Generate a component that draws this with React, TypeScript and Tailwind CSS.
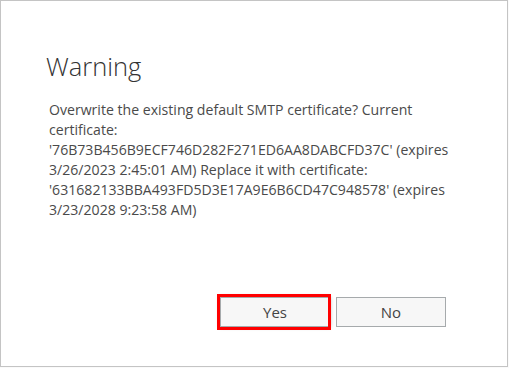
import React from 'react';

export default function App() {
  return (
    <div className="w-[509px] h-[368px] bg-[#fafafa]">
      <div
        className="w-[508px] h-[367px] bg-white border border-[#c4c4c4] flex flex-col pl-[45px] pr-[50px] pt-[47px]"
        style={{ fontFamily: '"Segoe UI", "Open Sans", "Noto Sans", sans-serif' }}
      >
        {/* Title */}
        <h1 className="text-[25.5px] leading-[36px] font-light text-[#333333]">Warning</h1>

        {/* Message */}
        <p className="mt-[16px] ml-[3px] w-[410px] text-[14.1px] leading-[20px] text-[#4a4a4a]">
          Overwrite the existing default SMTP certificate? Current certificate:
          '76B73B456B9ECF746D282F271ED6AA8DABCFD37C' (expires 3/26/2023 2:45:01 AM) Replace it with
          certificate: '631682133BBA493FD5D3E17A9E6B6CD47C948578' (expires 3/23/2028 9:23:58 AM)
        </p>

        {/* Buttons */}
        <div className="mt-auto mb-[39px] flex justify-end gap-[6px] pr-[11px]">
          <div className="relative">
            <button className="w-[110px] h-[30px] bg-[#f7f7f7] border border-[#a6aaac] text-[15px] text-[#444444] shadow-[0_0_4px_rgba(0,0,0,0.35)]">
              Yes
            </button>
            <div className="absolute -left-[3px] -top-[3px] -right-[1px] -bottom-[3px] border-[3px] border-[#ff0000] pointer-events-none" />
          </div>
          <button className="w-[110px] h-[30px] bg-[#f7f7f7] border border-[#a6aaac] text-[15px] text-[#444444]">
            No
          </button>
        </div>
      </div>
    </div>
  );
}
